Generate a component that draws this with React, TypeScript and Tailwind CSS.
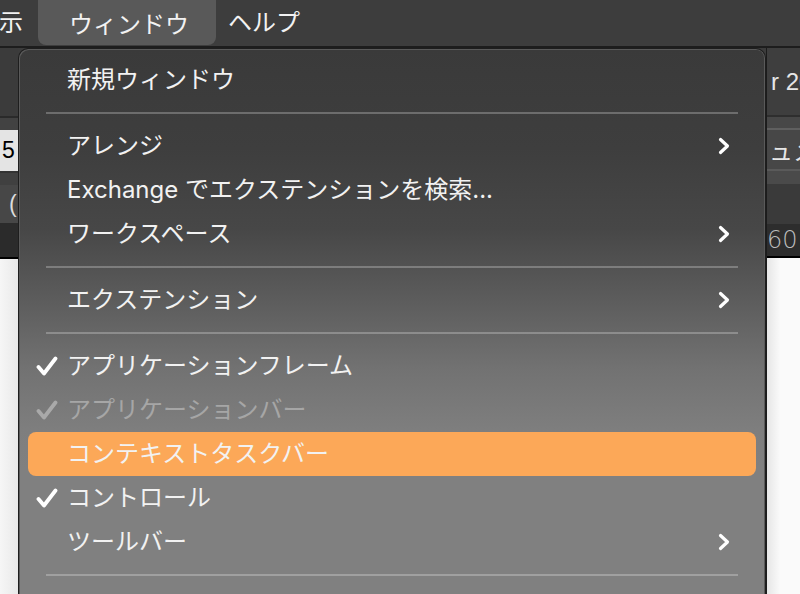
import React from "react";

type Item =
  | { kind: "sep" }
  | {
      kind: "item";
      label: string;
      check?: "on" | "dim";
      sub?: boolean;
      disabled?: boolean;
      active?: boolean;
    };

const items: Item[] = [
  { kind: "item", label: "新規ウィンドウ" },
  { kind: "sep" },
  { kind: "item", label: "アレンジ", sub: true },
  { kind: "item", label: "Exchange でエクステンションを検索..." },
  { kind: "item", label: "ワークスペース", sub: true },
  { kind: "sep" },
  { kind: "item", label: "エクステンション", sub: true },
  { kind: "sep" },
  { kind: "item", label: "アプリケーションフレーム", check: "on" },
  { kind: "item", label: "アプリケーションバー", check: "dim", disabled: true },
  { kind: "item", label: "コンテキストタスクバー", active: true },
  { kind: "item", label: "コントロール", check: "on" },
  { kind: "item", label: "ツールバー", sub: true },
  { kind: "sep" },
  { kind: "item", label: "" },
];

const Check = ({ dim }: { dim?: boolean }) => (
  <svg width="22" height="20" viewBox="0 0 22 20" className={dim ? "text-[#a9a9a9]" : "text-white"}>
    <path
      d="M2.5 11 L8 17.5 L19.5 2.5"
      fill="none"
      stroke="currentColor"
      strokeWidth="3.8"
      strokeLinecap="round"
      strokeLinejoin="round"
    />
  </svg>
);

const Chevron = () => (
  <svg width="14" height="20" viewBox="0 0 14 20" className="text-white">
    <path
      d="M3.5 3.5 L10.5 10 L3.5 16.5"
      fill="none"
      stroke="currentColor"
      strokeWidth="3.2"
      strokeLinecap="round"
      strokeLinejoin="round"
    />
  </svg>
);

const LeftStrip = () => (
  <div className="w-[18px] shrink-0 flex flex-col text-[23px] leading-none">
    <div className="h-[68px] bg-[#3b3b3b]" />
    <div className="h-[2px] bg-[#2a2a2a]" />
    <div className="h-[12px] bg-[#424242]" />
    <div className="h-[41px] bg-[#e4e4e4] text-black flex items-center pl-[2px] font-['Liberation_Sans',sans-serif]">5</div>
    <div className="h-[2px] bg-[#333]" />
    <div className="h-[12px] bg-[#404040]" />
    <div className="h-[38px] bg-[#474747] text-[#ddd] flex items-center pl-[9px] font-['Liberation_Sans',sans-serif]">(</div>
    <div className="h-[34px] bg-[#2b2b2b]" />
    <div className="h-[2px] bg-black" />
    <div className="flex-1 bg-[linear-gradient(90deg,#f6f6f6,#e9e9e9)]" />
  </div>
);

const RightStrip = () => (
  <div className="flex-1 flex flex-col text-[24px] leading-none text-[#e6e6e6] border-l border-[#1c1c1c] overflow-hidden">
    <div className="h-[67px] bg-[#3e3e3e] flex items-center pl-[4px] font-['Liberation_Sans',sans-serif] whitespace-nowrap">r 20</div>
    <div className="h-[2px] bg-[#2e2e2e]" />
    <div className="h-[11px] bg-[#474747]" />
    <div className="h-[2px] bg-[#5f5f5f]" />
    <div className="h-[39px] bg-[#474747] flex items-center pl-[2px] font-['Noto_Sans_CJK_JP',sans-serif] whitespace-nowrap">ュメ</div>
    <div className="h-[2px] bg-[#5a5a5a]" />
    <div className="h-[13px] bg-[#4a4a4a]" />
    <div className="h-[40px] bg-[#3a3a3a]" />
    <div className="h-[32px] bg-[#2d2d2d] text-[#bdbdbd] flex items-center font-['DejaVu_Sans',sans-serif] font-light whitespace-nowrap">60</div>
    <div className="h-[2px] bg-black" />
    <div className="flex-1 bg-[linear-gradient(90deg,#e6e6e6,#fafafa_40%)]" />
  </div>
);

export default function App() {
  return (
    <div className="w-[800px] h-[594px] overflow-hidden flex flex-col bg-[#3c3c3c] font-['Inter','Noto_Sans_CJK_JP',sans-serif] text-[#f2f2f2]">
      {/* menu bar */}
      <div className="h-[46px] shrink-0 flex items-start bg-[#3d3d3d] text-[24px] leading-none font-['Noto_Sans_CJK_JP',sans-serif]">
        <div className="h-[42px] flex items-center -ml-[1px] w-[39px]">示</div>
        <div className="h-[45px] w-[178px] flex items-center pl-[31px] bg-[#595959] rounded-b-[8px]">ウィンドウ</div>
        <div className="h-[42px] flex items-center pl-[12px]">ヘルプ</div>
      </div>
      <div className="h-[2px] shrink-0 bg-[#1d1d1d]" />

      <div className="flex-1 flex min-h-0">
        <LeftStrip />
        <div className="w-[748px] shrink-0 rounded-t-[10px] border border-b-0 border-[#1e1e1e] shadow-[inset_1px_1px_0_#5a5a5a,inset_-1px_0_0_#5a5a5a] bg-[linear-gradient(180deg,#3a3a3a_0px,#3e3e3e_100px,#474747_180px,#5c5c5c_250px,#727272_320px,#7e7e7e_380px,#808080_420px)] pt-[9px] px-[9px]">
          {items.map((it, i) =>
            it.kind === "sep" ? (
              <div key={i} className="h-[22px] flex items-center px-[18px]">
                <div className="h-[2px] w-full bg-white/25" />
              </div>
            ) : (
              <div
                key={i}
                className={
                  "h-[44px] flex items-center rounded-[8px] text-[24px] leading-none whitespace-nowrap " +
                  (it.active ? "bg-[#fca858] " : "") +
                  (it.disabled ? "text-[#a6a6a6]" : "text-[#f2f2f2]")
                }
              >
                <div className="w-[39px] flex justify-start pl-[8px]">
                  {it.check && <Check dim={it.check === "dim"} />}
                </div>
                <div className="flex-1">{it.label}</div>
                <div className="w-[40px] flex justify-start pl-[1px]">{it.sub && <Chevron />}</div>
              </div>
            )
          )}
        </div>
        <RightStrip />
      </div>
    </div>
  );
}
